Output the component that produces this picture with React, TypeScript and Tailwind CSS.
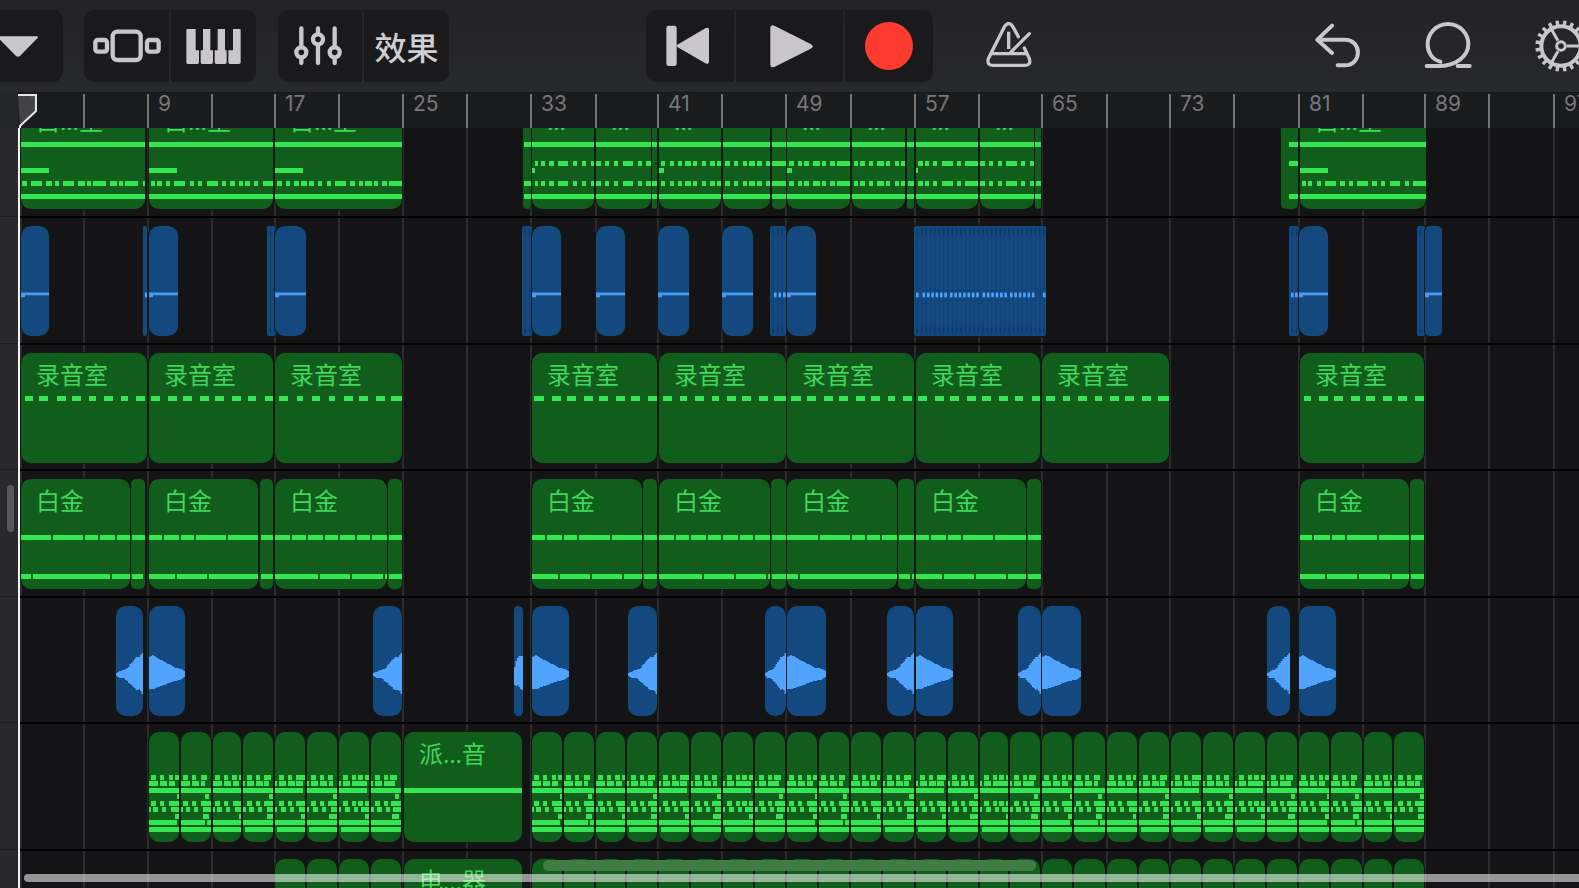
import type { ReactNode } from "react";

type Row = [number, string];
type Clip = { x: number; end: number; label?: string; rows?: Row[]; kind?: "line" | "stripes" | "rise" | "fall" | "mid"; dots?: number[] };
type Track = { name: string; color: "green" | "blue"; tall?: boolean; clips: Clip[] };

const GUTTER = 18;
const ROW_Y = [43, 49, 56, 62, 69, 75, 82, 88, 95];
const TICKS = [20, 83, 147, 211, 274, 338, 402, 466, 530, 595, 657, 721, 785, 850, 914, 978, 1041, 1106, 1169, 1233, 1298, 1362, 1424, 1488, 1553];

const c = (x: number, end: number, rows?: Row[], label?: string): Clip => ({ x, end, rows, label });

const organ = (x: number, end: number, dashes: string): Clip =>
  c(x, end, [[0, `${x}-${end}`], [4, `${x}-${x + 28}`], [6, dashes], [8, `${x}-${end}`]], "白…室");

const pulse = (x: number, end: number, upper: string, lower: string, pickup = "", label?: string): Clip =>
  c(x, end, [[0, `${x}-${end}`], [3, upper], [4, pickup], [6, lower], [8, `${x}-${end}`]], label);

const both = (x: number, end: number, dashes: string, pickup = "", label?: string) => pulse(x, end, dashes, dashes, pickup, label);

const studio = (x: number, end: number, dashes: string): Clip => c(x, end, [[0, dashes]], "录音室");

const platinum = (x: number, end: number, a: string, b: string): Clip => c(x, end, [[2, a], [8, b]], "白金");
const tail = (x: number, end: number, b?: string): Clip => c(x, end, [[2, `${x + 1}-${end}`], [8, b ?? `${x + 1}-${end}`]]);

const BEATS: Row[][] = [
  [[0, "2-7 11-15 20-24 26-31"], [1, "0-9 11-18 20-26"], [2, "0-31"], [3, "28-31"], [4, "2-7 11-15 20-31"], [5, "0-2 4-9 13-17 22-31"], [6, "26-31"], [7, "0-28"], [8, "0-31"]],
  [[0, "2-7 11-15 20-26"], [1, "0-9 11-18 20-24"], [2, "0-31"], [3, "24-28"], [4, "2-7 11-15 20-31"], [5, "0-2 5-9 13-17 22-31"], [6, "22-28"], [7, "0-24 26-31"], [8, "0-31"]],
  [[0, "2-7 11-15 19-24 26-29"], [1, "0-9 11-18 20-26"], [2, "0-31"], [4, "2-7 11-15 20-31"], [5, "0-2 4-9 13-17 22-31"], [6, "26-29"], [7, "0-31"], [8, "0-31"]],
  [[0, "4-9 13-17 21-28"], [1, "0-2 4-11 13-20 21-26"], [2, "0-31"], [3, "26-31"], [4, "4-9 13-17 21-31"], [5, "0-3 6-11 15-19 24-31"], [6, "24-31"], [7, "0-31"], [8, "2-31"]],
  [[0, "4-9 13-17 21-31"], [1, "0-2 4-11 13-20 21-28"], [2, "0-28"], [4, "4-9 13-17 21-31"], [5, "0-2 6-11 15-19 24-31"], [6, "26-31"], [7, "0-31"], [8, "2-31"]],
  [[0, "4-9 13-17 21-26"], [1, "0-2 4-11 13-20 22-26"], [2, "0-31"], [3, "26-31"], [4, "4-9 13-17 21-31"], [5, "0-2 6-11 15-19 24-31"], [6, "22-31"], [7, "0-31"], [8, "2-31"]],
  [[0, "4-9 13-17 19-24 26-31"], [1, "0-2 4-11 13-28"], [2, "0-28"], [4, "4-9 13-17 19-24 26-31"], [5, "0-2 6-11 15-19 22-31"], [6, "26-31"], [7, "0-31"], [8, "2-31"]],
  [[0, "4-9 13-17 19-26"], [1, "0-2 4-11 13-24"], [2, "0-31"], [3, "24-28"], [4, "4-9 13-17 20-31"], [5, "0-3 6-11 15-19 22-31"], [6, "21-28"], [7, "0-31"], [8, "0-31"]],
];

const INTRO_STARTS = [149, 181, 213, 243, 275, 307, 339, 371, 403];
const MAIN_STARTS = [532, 564, 596, 627, 659, 691, 723, 755, 787, 819, 851, 883, 916, 948, 980, 1010, 1042, 1074, 1107, 1139, 1171, 1203, 1235, 1267, 1299, 1331, 1364, 1394, 1426];

const shift = (rows: Row[], dx: number): Row[] =>
  rows.map(([k, s]) => [k, s.split(" ").map((p) => p.split("-").map((n) => Number(n) + dx).join("-")).join(" ")]);

const beats = (starts: number[], filled: boolean): Clip[] =>
  starts.slice(0, -1).map((x, i) => c(x, starts[i + 1] - 2, filled ? shift(BEATS[i % 8], x) : undefined));

const run = (start: number, count: number) => Array.from({ length: count }, (_, i) => start + i * 4.37);
const line = (x: number, end: number): Clip => ({ x, end, kind: "line" });
const stripes = (x: number, end: number, dots: number[] = []): Clip => ({ x, end, kind: "stripes", dots });
const rise = (x: number, end: number): Clip => ({ x, end, kind: "rise" });
const fall = (x: number, end: number): Clip => ({ x, end, kind: "fall" });

const TRACKS: Track[] = [
  {
    name: "白…室",
    color: "green",
    tall: true,
    clips: [
      organ(21, 145, "22-27 31-42 46-52 55-59 63-74 78-85 87-91 93-106 110-117 119-123 125-138 143-145"),
      organ(149, 273, "151-155 157-162 166-170 174-185 190-194 198-202 207-218 222-226 230-235 239-243 245-250 254-258 263-273"),
      organ(275, 402, "277-282 286-290 294-299 301-307 309-314 318-322 327-331 335-346 350-355 359-363 365-372 374-378 382-387 389-402"),
      c(523, 531, [[0, "524-531"], [6, "524-531"], [8, "524-531"]]),
      both(532, 594, "535-538 541-545 549-554 558-568 573-577 582-586 591-594", "532-535", "…"),
      both(596, 651, "596-601 605-609 614-618 623-633 638-642 646-651", "", "…"),
      pulse(652, 657, "", "652-657"),
      both(659, 721, "661-665 670-674 678-682 685-691 693-697 702-706 710-715 717-721", "659-664", "…"),
      both(723, 770, "725-730 734-738 743-747 749-755 757-762 766-770"),
      both(772, 786, "772-786"),
      both(787, 850, "789-794 798-802 804-809 813-820 822-826 830-835 837-850", "787-792", "…"),
      both(852, 905, "854-858 860-865 869-873 877-884 886-890 895-899 901-905", "", "…"),
      pulse(907, 914, "", "908-914"),
      both(916, 978, "918-923 925-929 933-937 942-953 957-961 965-978", "916-918", "…"),
      both(980, 1034, "980-985 989-993 998-1002 1006-1017 1021-1025 1030-1034", "", "…"),
      pulse(1035, 1041, "", "1036-1041"),
      c(1281, 1298, [[0, "1289-1298"], [3, "1289-1298"], [8, "1289-1298"]]),
      organ(1300, 1426, "1302-1306 1308-1312 1317-1321 1325-1336 1340-1345 1349-1353 1357-1368 1372-1377 1381-1385 1390-1400 1405-1409 1413-1426"),
    ],
  },
  {
    name: "贝斯",
    color: "blue",
    tall: true,
    clips: [
      line(21, 49), stripes(143, 147, [145]), line(149, 178), stripes(267, 276), line(275, 306), stripes(522, 532), line(532, 561),
      line(596, 625), line(658, 689), line(722, 753), stripes(770, 786, [774, 778.5, 783]), line(787, 816),
      stripes(914, 1046, [916, ...run(922.5, 6), ...run(950, 7), ...run(982.5, 6), ...run(1010, 6), 1043]),
      stripes(1289, 1299, [1291, 1295]), line(1299, 1328), stripes(1417, 1425), line(1425, 1442),
    ],
  },
  {
    name: "录音室",
    color: "green",
    clips: [
      studio(21, 147, "25-33 39-48 57-66 72-81 89-96 104-113 121-128 136-145"),
      studio(149, 273, "151-160 168-177 183-192 200-209 215-224 232-241 248-256 265-273"),
      studio(275, 402, "279-288 297-303 312-320 329-335 344-353 359-368 376-385 391-402"),
      studio(532, 657, "534-544 552-561 567-576 584-593 599-608 616-625 631-640 648-657"),
      studio(659, 786, "663-672 680-687 695-704 712-719 727-736 742-751 759-768 774-786"),
      studio(787, 914, "791-801 807-816 824-833 839-848 856-865 871-880 888-895 903-912"),
      studio(916, 1040, "918-927 935-944 950-959 967-976 982-991 999-1008 1015-1023 1032-1040"),
      studio(1042, 1169, "1046-1055 1063-1070 1078-1087 1095-1102 1110-1119 1125-1134 1142-1151 1158-1169"),
      studio(1300, 1424, "1304-1311 1319-1328 1334-1343 1351-1360 1366-1375 1383-1392 1398-1407 1415-1424"),
    ],
  },
  {
    name: "白金",
    color: "green",
    tall: true,
    clips: [
      platinum(21, 130, "21-51 53-83 85-98 100-115 117-130", "21-31 33-110 112-130"), tail(131, 145, "132-143"),
      platinum(149, 258, "149-162 164-179 181-194 196-226 228-258", "149-175 177-207 209-258"), tail(260, 273),
      platinum(275, 387, "275-290 292-306 308-323 325-338 340-355 357-370 372-387", "275-318 320-350 352-383 385-387"), tail(388, 402),
      platinum(532, 642, "532-545 547-562 564-577 579-610 612-642", "532-558 560-590 592-622 624-642"), tail(643, 657),
      platinum(659, 770, "659-674 676-689 691-706 708-721 723-738 740-753 755-770", "659-702 704-734 736-766 768-770"), tail(771, 786),
      platinum(787, 897, "787-818 820-850 852-865 867-880 882-897", "787-798 800-897"), tail(898, 914, "899-910 912-914"),
      platinum(916, 1026, "916-929 931-946 948-961 963-993 995-1026", "916-942 944-974 976-1006 1008-1026"), tail(1027, 1041),
      platinum(1300, 1409, "1300-1312 1314-1330 1332-1345 1347-1377 1379-1409", "1300-1325 1327-1357 1359-1390 1392-1409"), tail(1410, 1424),
    ],
  },
  {
    name: "钹",
    color: "blue",
    clips: [
      rise(116, 143), fall(149, 185), rise(373, 402), { x: 514, end: 523, kind: "mid" }, fall(532, 569), rise(628, 657), rise(765, 786), fall(787, 826),
      rise(887, 914), fall(916, 953), rise(1018, 1041), fall(1042, 1081), rise(1267, 1290), fall(1299, 1336),
    ],
  },
  {
    name: "派…音",
    color: "green",
    tall: true,
    clips: [...beats(INTRO_STARTS, true), c(404, 522, [[2, "404-522"]], "派…音"), ...beats(MAIN_STARTS, true)],
  },
  {
    name: "电…器",
    color: "green",
    clips: [...beats(INTRO_STARTS.slice(4), false), c(404, 522, undefined, "电…器"), ...beats(MAIN_STARTS, false)],
  },
];

type Curve = [number, number][];
const WAVES: Record<"rise" | "fall" | "mid", [Curve, Curve]> = {
  fall: [
    [[0, 17], [0.08, 19], [0.15, 18], [0.22, 16], [0.38, 13], [0.57, 9.5], [0.7, 6.5], [0.85, 5.5], [0.95, 4.5], [1, 3]],
    [[0, 15], [0.12, 15], [0.2, 13.5], [0.35, 12], [0.55, 9], [0.7, 7], [0.88, 6], [0.95, 4], [1, 3]],
  ],
  rise: [
    [[0, 1], [0.15, 3], [0.33, 4.5], [0.45, 6], [0.52, 9.5], [0.65, 13], [0.78, 17], [0.9, 17.5], [1, 21]],
    [[0, 2], [0.1, 4.5], [0.28, 4], [0.4, 7], [0.55, 10.5], [0.7, 14], [0.8, 16.5], [0.86, 15], [0.95, 17], [1, 20]],
  ],
  mid: [
    [[0, 7], [0.25, 14], [0.6, 18], [1, 18]],
    [[0, 11], [0.3, 12], [0.5, 10], [0.7, 15], [1, 16]],
  ],
};

function level(curve: Curve, t: number) {
  const i = Math.max(1, curve.findIndex(([p]) => p >= t));
  const [a, b] = [curve[i - 1], curve[i]];
  return a[1] + ((b[1] - a[1]) * (t - a[0])) / (b[0] - a[0]);
}

function Waveform({ shape, width }: { shape: "rise" | "fall" | "mid"; width: number }) {
  const [top, bottom] = WAVES[shape];
  const steps = Math.floor(width / 1.5);
  const bars = Array.from({ length: steps }, (_, i) => {
    const t = i / (steps - 1);
    const up = Math.round(level(top, t));
    const down = Math.round(level(bottom, t));
    const x = (i * width) / steps;
    return `M${x} ${68 - up}h${width / steps + 0.2}v${up + down}H${x}z`;
  });
  return <path d={bars.join("")} fill="#50a3ff" />;
}

function ClipDrawing({ clip }: { clip: Clip }) {
  const width = clip.end - clip.x;
  const lines = clip.kind === "stripes" ? Array.from({ length: Math.floor(width / 4.37) }, (_, i) => 3 + i * 4.37) : [];
  return (
    <svg className="absolute inset-0" width={width} height="110" viewBox={`0 0 ${width} 110`} aria-hidden="true">
      {clip.rows?.flatMap(([k, segments]) =>
        segments.split(" ").filter(Boolean).map((s) => {
          const [a, b] = s.split("-").map(Number);
          return <rect key={`${k}-${s}`} x={a - clip.x} y={ROW_Y[k]} width={b - a} height="5" fill="#34e552" />;
        }),
      )}
      {clip.kind === "line" && <path d={`M0 66.6H${width}V69.3H4V71.3H0z`} fill="#4b9bf2" />}
      {lines.map((x) => (
        <g key={x} fill="#0f3a6c">
          <rect x={x} y="0" width="1" height="110" opacity=".45" />
          <rect x={x - 0.5} y="3" width="1.6" height="6" />
          <rect x={x - 0.5} y="101" width="1.6" height="6" />
        </g>
      ))}
      {clip.dots?.map((x) => <rect key={x} x={x - clip.x} y="66.6" width="2.6" height="4.7" fill="#50a3ff" />)}
      {(clip.kind === "rise" || clip.kind === "fall" || clip.kind === "mid") && <Waveform shape={clip.kind} width={width} />}
    </svg>
  );
}

function Region({ clip, color }: { clip: Clip; color: "green" | "blue" }) {
  const width = clip.end - clip.x;
  const radius = clip.kind === "stripes" ? "rounded-[2px]" : width < 20 ? "rounded-[5px]" : "rounded-[10px]";
  const fill = color === "green" ? "bg-[#115e1c]" : "bg-[#14497f]";
  return (
    <div
      className={`absolute top-[10px] h-[110px] overflow-hidden shadow-[0_0_0_1px_#121a14] ${radius} ${fill}`}
      style={{ left: clip.x - GUTTER, width }}
    >
      <ClipDrawing clip={clip} />
      {clip.label && (
        <p className="relative whitespace-nowrap pl-[15px] pt-[8px] font-['Noto_Sans','Noto_Sans_CJK_SC',sans-serif] text-[24px] leading-[28px] text-[#3fd65a]">
          {clip.label}
        </p>
      )}
    </div>
  );
}

function Tool({ label, className = "", children }: { label: string; className?: string; children: ReactNode }) {
  return (
    <button type="button" aria-label={label} className={`flex h-[72px] items-center justify-center bg-[#1a1a1c] ${className}`}>
      {children}
    </button>
  );
}

function IconButton({ label, className = "", children }: { label: string; className?: string; children: ReactNode }) {
  return (
    <button type="button" aria-label={label} className={`flex h-[72px] shrink-0 items-center ${className}`}>
      {children}
    </button>
  );
}

function Toolbar() {
  const spokes = [0, 120, 240];
  const teeth = Array.from({ length: 20 }, (_, i) => i * 18 + 9);
  return (
    <header className="grid h-[92px] shrink-0 grid-cols-[1fr_auto_1fr] items-center overflow-hidden bg-linear-to-b from-[#232326] to-[#28292b] text-[#c9c7cb]">
      <div className="flex min-w-0">
        <Tool label="轨道菜单" className="w-[63px] justify-start rounded-r-[10px]">
          <svg width="39" height="21" viewBox="0 111 117 63" fill="currentColor">
            <path d="M-8 112H110Q117 112 112 118L60 171Q54 176 48 171L-8 114z" />
          </svg>
        </Tool>
        <div className="ml-[21px] flex gap-0.5 overflow-hidden rounded-[10px]">
          <Tool label="浏览器" className="w-[85px]">
            <svg width="68" height="34" viewBox="278 83 204 102" fill="none" stroke="currentColor" strokeWidth="13">
              <rect x="337" y="91" width="84" height="85" rx="14" />
              <rect x="285" y="116" width="35" height="35" rx="7" />
              <rect x="440" y="116" width="35" height="35" rx="7" />
            </svg>
          </Tool>
          <Tool label="键盘" className="w-[85px]">
            <svg width="55" height="35" viewBox="557 84 165 105" fill="currentColor">
              <path d="M562 84H586V148H596V184Q596 189 591 189H563Q558 189 558 184V88Q558 84 562 84z" />
              <path d="M608 84H630V148H638V184Q638 189 633 189H606Q601 189 601 184V148H608z" />
              <path d="M652 84H674V148H679V184Q679 189 674 189H648Q643 189 643 184V148H652z" />
              <path d="M698 84H717Q721 84 721 88V184Q721 189 716 189H689Q684 189 684 184V148H698z" />
            </svg>
          </Tool>
        </div>
        <div className="ml-[22px] flex gap-0.5 overflow-hidden rounded-[10px]">
          <Tool label="混音控制" className="w-[84px] pr-1">
            <svg width="50" height="40" viewBox="880 77 150 120" fill="none" stroke="currentColor" strokeWidth="13" strokeLinecap="round">
              <path d="M905 84V138M905 176V188M955 84V98M955 136V188M1005 84V138M1005 176V188" />
              <circle cx="905" cy="156" r="15" />
              <circle cx="955" cy="117" r="15" />
              <circle cx="1005" cy="156" r="15" />
            </svg>
          </Tool>
          <Tool label="效果" className="w-[85px]">
            <span className="font-['Noto_Sans_CJK_SC',sans-serif] text-[32px] font-medium leading-[40px] text-[#d0ced2]">效果</span>
          </Tool>
        </div>
      </div>
      <div className="flex gap-0.5 overflow-hidden rounded-[10px]">
        <Tool label="回到开头" className="w-[88px] pr-1">
          <svg width="44" height="42" viewBox="110 75 132 126" fill="currentColor">
            <rect x="111" y="77" width="31" height="121" rx="7" />
            <path d="M144 134L228 85Q239 79 239 90V184Q239 196 228 190L144 141Q140 137 144 134z" />
          </svg>
        </Tool>
        <Tool label="播放" className="w-[107px] pl-1">
          <svg width="43" height="43" viewBox="420 74 129 129" fill="currentColor">
            <path d="M421 82Q422 71 433 76L542 131Q554 138 542 145L433 200Q422 204 421 193z" />
          </svg>
        </Tool>
        <Tool label="录音" className="w-[88px]">
          <span className="size-12 rounded-full bg-[#ff3b30]" />
        </Tool>
      </div>
      <div className="flex min-w-0 items-center">
        <IconButton label="节拍器" className="ml-[53px]">
          <svg width="46" height="48" viewBox="1068 66 138 144" fill="none" stroke="currentColor" strokeWidth="10" strokeLinecap="round">
            <path d="M1165 110L1148 79Q1136 62 1124 79L1075 176Q1070 196 1088 196H1185Q1204 196 1198 176L1183 144" />
            <path d="M1084 161H1188M1198 101L1143 156" />
            <path d="M1136 95V147" strokeLinecap="butt" />
          </svg>
        </IconButton>
        <IconButton label="撤销" className="ml-auto">
          <svg width="46" height="46" viewBox="196 67 138 138" fill="none" stroke="currentColor" strokeWidth="12" strokeLinecap="round" strokeLinejoin="round">
            <path d="M247 75L203 117L247 157M205 117H285C338 117 338 194 285 194H264" />
          </svg>
        </IconButton>
        <IconButton label="循环乐段" className="ml-[63px]">
          <svg width="48" height="48" viewBox="523 62 144 144" fill="none" stroke="currentColor" strokeWidth="12" strokeLinecap="round">
            <path d="M572 181C546 174 534 152 534 129A61 61 0 1 1 656 129C656 164 620 194 565 194H531M624 194H660" />
          </svg>
        </IconButton>
        <IconButton label="设置" className="-mr-[9px] ml-[62px]">
          <svg width="54" height="54" viewBox="851 57 162 162" fill="none" stroke="currentColor">
            <circle cx="932" cy="138" r="59" strokeWidth="12" />
            <circle cx="932" cy="138" r="13" strokeWidth="9" />
            {spokes.map((a) => <path key={a} d="M950 138H988" strokeWidth="9" transform={`rotate(${a} 932 138)`} />)}
            {teeth.map((a) => <path key={a} d="M994 138H1009" strokeWidth="10" transform={`rotate(${a} 932 138)`} />)}
          </svg>
        </IconButton>
      </div>
    </header>
  );
}

function Ruler() {
  return (
    <div className="flex h-[36px] shrink-0 bg-[#1b1c1e] shadow-[inset_0_1px_0_#17181a]">
      <div className="w-[18px] shrink-0 bg-[#252628]" />
      <div className="relative min-w-0 flex-1 overflow-hidden font-['Inter',sans-serif] text-[21px] leading-[24px] text-[#77777a]">
        {TICKS.map((x, i) => (
          <div key={x} className={`absolute bottom-0 top-[2px] pl-[9px] ${i ? "border-l-2 border-[#757578]" : ""}`} style={{ left: x - GUTTER }}>
            {i % 2 === 0 && <span className="block -mt-0.5">{i * 4 + 1}</span>}
          </div>
        ))}
        <svg className="absolute left-0 top-[2px]" width="20" height="34" viewBox="0 0 20 34" aria-hidden="true">
          <path d="M0 1H18V17L2 32V34" fill="#4a4a4d" fillOpacity=".85" stroke="#e6e4e8" strokeWidth="2" />
        </svg>
      </div>
    </div>
  );
}

export default function App() {
  return (
    <div className="flex h-screen flex-col overflow-hidden bg-[#141416]">
      <Toolbar />
      <Ruler />
      <main className="relative flex min-h-0 flex-1 overflow-hidden">
        <aside className="flex w-[18px] shrink-0 flex-col overflow-hidden bg-[#29292c]">
          <div className="-mt-[39px]">
            {TRACKS.map((t) => (
              <div key={t.name} className={`border-t border-[#1d1d20] ${t.tall ? "h-[127px]" : "h-[126px]"}`} />
            ))}
          </div>
        </aside>
        <div className="relative min-w-0 flex-1 overflow-hidden">
          {TICKS.map((x) => (
            <div key={x} className="absolute inset-y-0 w-0.5 bg-[#2b2b2d]" style={{ left: x - GUTTER }} />
          ))}
          <div className="-mt-[39px]">
            {TRACKS.map((t) => (
              <section key={t.name} aria-label={t.name} className={`relative border-t-2 border-black ${t.tall ? "h-[127px]" : "h-[126px]"}`}>
                <div className="absolute inset-x-0 -top-0.5">
                  {t.clips.map((clip) => <Region key={clip.x} clip={clip} color={t.color} />)}
                </div>
              </section>
            ))}
          </div>
          <div className="absolute inset-y-0 left-0 w-0.5 bg-[#f2f1f3]" />
        </div>
        <div className="absolute left-[7px] top-[357px] h-[47px] w-[7px] rounded-full bg-[#58585b]" />
        <div className="absolute bottom-[17px] left-[543px] h-[11px] w-[493px] rounded-full bg-[#3f7c46]" />
        <div className="absolute bottom-[6px] left-6 right-0 h-2 rounded-l-full bg-white/55" />
      </main>
    </div>
  );
}
